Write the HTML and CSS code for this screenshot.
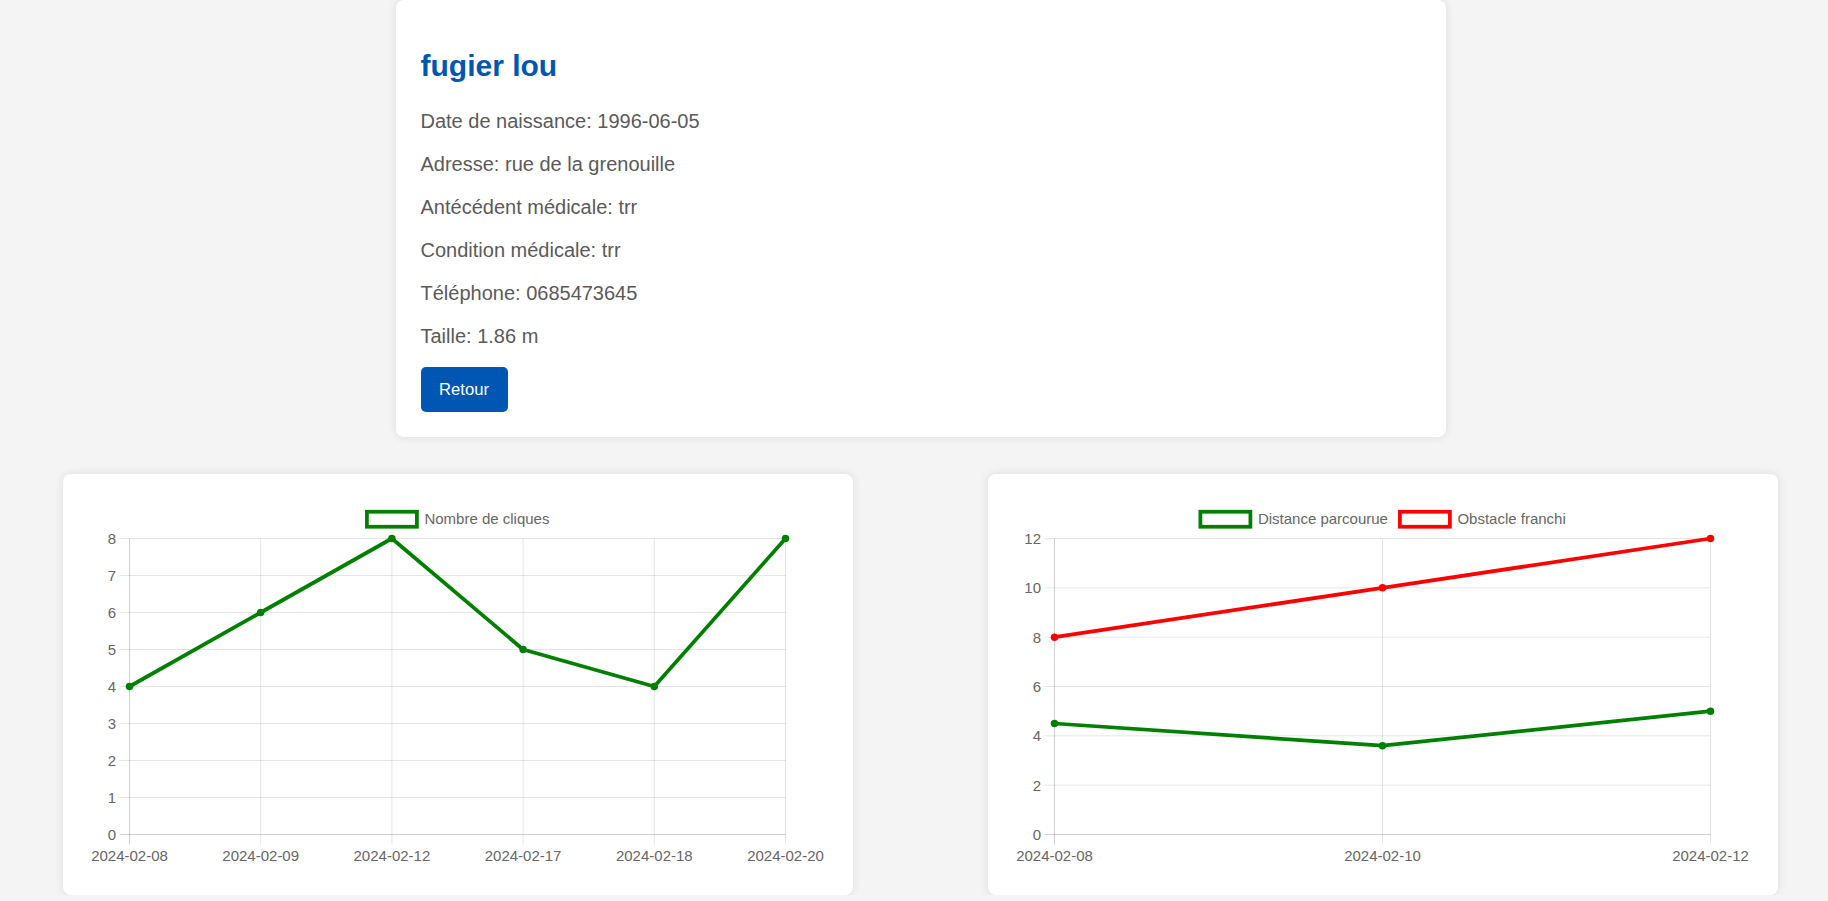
FILE: index.html
```html
<!DOCTYPE html>
<html lang="fr">
<head>
<meta charset="utf-8">
<title>fugier lou</title>
<link rel="stylesheet" href="styles.css">
</head>
<body>
<div class="page">
  <section class="card profile">
    <h2 class="name">fugier lou</h2>
    <p class="info">Date de naissance: 1996-06-05</p>
    <p class="info">Adresse: rue de la grenouille</p>
    <p class="info">Antécédent médicale: trr</p>
    <p class="info">Condition médicale: trr</p>
    <p class="info">Téléphone: 0685473645</p>
    <p class="info">Taille: 1.86 m</p>
    <div class="actions"><button class="btn">Retour</button></div>
  </section>

  <div class="charts">
    <section class="card chart-card">
      <svg class="chart" width="740" height="371" viewBox="0 0 740 371">
        <g class="grid">
          <line x1="31.5" y1="39.5" x2="697.5" y2="39.5"/>
          <line x1="31.5" y1="76.5" x2="697.5" y2="76.5"/>
          <line x1="31.5" y1="113.5" x2="697.5" y2="113.5"/>
          <line x1="31.5" y1="150.5" x2="697.5" y2="150.5"/>
          <line x1="31.5" y1="187.5" x2="697.5" y2="187.5"/>
          <line x1="31.5" y1="224.5" x2="697.5" y2="224.5"/>
          <line x1="31.5" y1="261.5" x2="697.5" y2="261.5"/>
          <line x1="31.5" y1="298.5" x2="697.5" y2="298.5"/>
          <line x1="172.7" y1="39.5" x2="172.7" y2="345.5"/>
          <line x1="303.9" y1="39.5" x2="303.9" y2="345.5"/>
          <line x1="435.1" y1="39.5" x2="435.1" y2="345.5"/>
          <line x1="566.3" y1="39.5" x2="566.3" y2="345.5"/>
          <line x1="697.5" y1="39.5" x2="697.5" y2="345.5"/>
        </g>
        <g class="axis">
          <line x1="41.5" y1="39.5" x2="41.5" y2="345.5"/>
          <line x1="31.5" y1="335.5" x2="697.5" y2="335.5"/>
        </g>
        <g class="ytick">
          <text x="28" y="44.9">8</text>
          <text x="28" y="81.9">7</text>
          <text x="28" y="118.9">6</text>
          <text x="28" y="155.9">5</text>
          <text x="28" y="192.9">4</text>
          <text x="28" y="229.9">3</text>
          <text x="28" y="266.9">2</text>
          <text x="28" y="303.9">1</text>
          <text x="28" y="340.9">0</text>
        </g>
        <g class="xtick">
          <text x="41.5" y="362">2024-02-08</text>
          <text x="172.7" y="362">2024-02-09</text>
          <text x="303.9" y="362">2024-02-12</text>
          <text x="435.1" y="362">2024-02-17</text>
          <text x="566.3" y="362">2024-02-18</text>
          <text x="697.5" y="362">2024-02-20</text>
        </g>
        <g class="legend">
          <rect class="box-green" x="278.9" y="12.75" width="50" height="15"/>
          <text x="336.4" y="24.5">Nombre de cliques</text>
        </g>
        <polyline class="line-green" points="41.5,187.5 172.7,113.5 303.9,39.5 435.1,150.5 566.3,187.5 697.5,39.5"/>
        <g class="dots-green">
          <circle cx="41.5" cy="187.5" r="3.75"/>
          <circle cx="172.7" cy="113.5" r="3.75"/>
          <circle cx="303.9" cy="39.5" r="3.75"/>
          <circle cx="435.1" cy="150.5" r="3.75"/>
          <circle cx="566.3" cy="187.5" r="3.75"/>
          <circle cx="697.5" cy="39.5" r="3.75"/>
        </g>
      </svg>
    </section>

    <section class="card chart-card">
      <svg class="chart" width="740" height="371" viewBox="0 0 740 371">
        <g class="grid">
          <line x1="31.5" y1="39.5" x2="697.5" y2="39.5"/>
          <line x1="31.5" y1="88.83" x2="697.5" y2="88.83"/>
          <line x1="31.5" y1="138.17" x2="697.5" y2="138.17"/>
          <line x1="31.5" y1="187.5" x2="697.5" y2="187.5"/>
          <line x1="31.5" y1="236.83" x2="697.5" y2="236.83"/>
          <line x1="31.5" y1="286.17" x2="697.5" y2="286.17"/>
          <line x1="369.5" y1="39.5" x2="369.5" y2="345.5"/>
          <line x1="697.5" y1="39.5" x2="697.5" y2="345.5"/>
        </g>
        <g class="axis">
          <line x1="41.5" y1="39.5" x2="41.5" y2="345.5"/>
          <line x1="31.5" y1="335.5" x2="697.5" y2="335.5"/>
        </g>
        <g class="ytick">
          <text x="28" y="44.9">12</text>
          <text x="28" y="94.2">10</text>
          <text x="28" y="143.6">8</text>
          <text x="28" y="192.9">6</text>
          <text x="28" y="242.2">4</text>
          <text x="28" y="291.6">2</text>
          <text x="28" y="340.9">0</text>
        </g>
        <g class="xtick">
          <text x="41.5" y="362">2024-02-08</text>
          <text x="369.5" y="362">2024-02-10</text>
          <text x="697.5" y="362">2024-02-12</text>
        </g>
        <g class="legend">
          <rect class="box-green" x="187.4" y="12.75" width="50" height="15"/>
          <text x="244.9" y="24.5">Distance parcourue</text>
          <rect class="box-red" x="386.9" y="12.75" width="50" height="15"/>
          <text x="444.4" y="24.5">Obstacle franchi</text>
        </g>
        <polyline class="line-green" points="41.5,224.5 369.5,246.7 697.5,212.17"/>
        <polyline class="line-red" points="41.5,138.17 369.5,88.83 697.5,39.5"/>
        <g class="dots-green">
          <circle cx="41.5" cy="224.5" r="3.75"/>
          <circle cx="369.5" cy="246.7" r="3.75"/>
          <circle cx="697.5" cy="212.17" r="3.75"/>
        </g>
        <g class="dots-red">
          <circle cx="41.5" cy="138.17" r="3.75"/>
          <circle cx="369.5" cy="88.83" r="3.75"/>
          <circle cx="697.5" cy="39.5" r="3.75"/>
        </g>
      </svg>
    </section>
  </div>
</div>
</body>
</html>
```

FILE: styles.css
```css
* {
  box-sizing: border-box;
}

html, body {
  margin: 0;
  padding: 0;
}

body {
  background: #f4f4f4;
  font-family: "Liberation Sans", Arial, sans-serif;
  color: #555;
}

.page {
  display: flex;
  flex-direction: column;
  align-items: center;
  padding-left: 13px;
}

.card {
  background: #fff;
  border-radius: 8px;
  box-shadow: 0 0 10px rgba(0, 0, 0, 0.1);
}

.profile {
  width: 1050px;
  padding: 25px;
}

.name {
  margin: 23.6px 0 27.3px;
  font-size: 30px;
  line-height: 34.5px;
  font-weight: bold;
  color: #0056b3;
}

.info {
  margin: 20px 0 0;
  font-size: 20px;
  line-height: 23px;
  color: #5a5a5a;
}

.name + .info {
  margin-top: 0;
}

.actions {
  margin-top: 19px;
  display: flex;
}

.btn {
  font-family: "Liberation Sans", Arial, sans-serif;
  font-size: 16.67px;
  line-height: 19.2px;
  padding: 12.5px 18.5px;
  border: none;
  border-radius: 5px;
  background: #0056b3;
  color: #fff;
  cursor: pointer;
}

.charts {
  display: flex;
  gap: 135px;
  margin-top: 37px;
}

.chart-card {
  width: 790px;
  height: 421px;
  padding: 25px;
}

.chart {
  display: block;
}

.grid line {
  stroke: rgba(0, 0, 0, 0.1);
  stroke-width: 1;
}

.axis line {
  stroke: rgba(0, 0, 0, 0.18);
  stroke-width: 1;
}

.ytick text,
.xtick text,
.legend text {
  font-family: "Liberation Sans", Arial, sans-serif;
  font-size: 15px;
  fill: #666;
}

.ytick text {
  text-anchor: end;
}

.xtick text {
  text-anchor: middle;
}

.box-green,
.box-red {
  fill: #fff;
  stroke-width: 3.75;
}

.box-green {
  stroke: #008000;
}

.box-red {
  stroke: #ff0000;
}

.line-green,
.line-red {
  fill: none;
  stroke-width: 3.75;
  stroke-linejoin: round;
}

.line-green {
  stroke: #008000;
}

.line-red {
  stroke: #ff0000;
}

.dots-green circle {
  fill: #008000;
}

.dots-red circle {
  fill: #ff0000;
}
```
